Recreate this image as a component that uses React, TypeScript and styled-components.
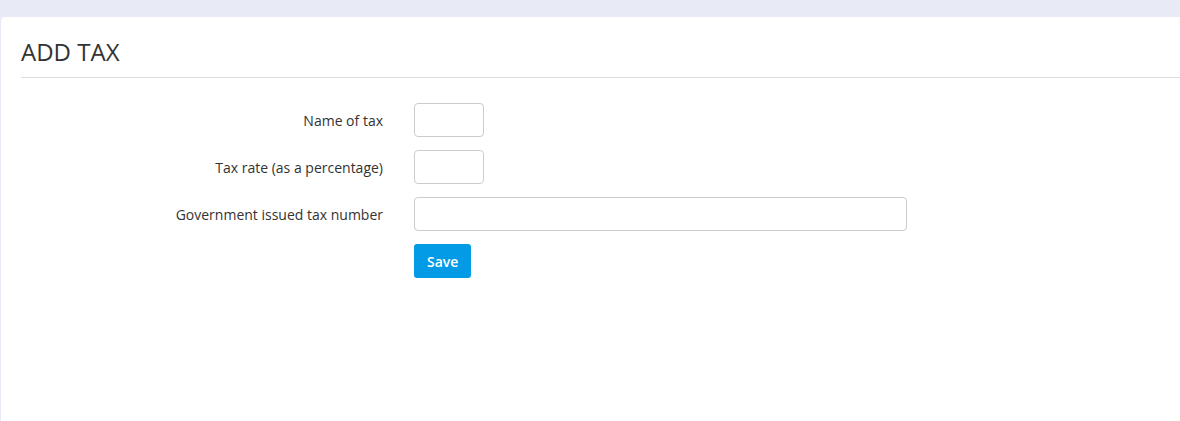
import React from "react";
import styled, { createGlobalStyle } from "styled-components";

interface Field {
    label: string;
    width: number;
}

const fields: Field[] = [
    { label: "Name of tax", width: 70 },
    { label: "Tax rate (as a percentage)", width: 70 },
    { label: "Government issued tax number", width: 493 },
];

const App: React.FC = () => {
    return (
        <>
            <GlobalStyle />
            <Page>
                <Card>
                    <Heading>ADD TAX</Heading>
                    <Form onSubmit={(e) => e.preventDefault()}>
                        {fields.map((field) => (
                            <React.Fragment key={field.label}>
                                <Label>{field.label}</Label>
                                <Input type="text" $width={field.width} />
                            </React.Fragment>
                        ))}
                        <span />
                        <div>
                            <SaveButton type="submit">Save</SaveButton>
                        </div>
                    </Form>
                </Card>
            </Page>
        </>
    );
};

export default App;

// Styled Components
const GlobalStyle = createGlobalStyle`
    html, body {
        margin: 0;
        padding: 0;
        background: #e8eaf5;
        font-family: "Open Sans", "Liberation Sans", sans-serif;
        color: #333;
        overflow: hidden;
    }
`;

const Page = styled.div`
    padding: 17px 0 0 1px;
    height: 100vh;
    box-sizing: border-box;
`;

const Card = styled.div`
    background: #fff;
    border-top-left-radius: 4px;
    height: 100%;
    padding-left: 20px;
`;

const Heading = styled.h2`
    margin: 0;
    padding-top: 18px;
    padding-bottom: 9px;
    font-size: 24px;
    font-weight: 400;
    line-height: 33px;
    color: #333;
    border-bottom: 1px solid #ddd;
`;

const Form = styled.form`
    display: grid;
    grid-template-columns: 362px auto;
    column-gap: 31px;
    row-gap: 13px;
    align-items: center;
    margin-top: 25px;
`;

const Label = styled.label`
    text-align: right;
    font-size: 14px;
    color: #333;
`;

const Input = styled.input<{ $width: number }>`
    width: ${(p) => p.$width}px;
    height: 34px;
    box-sizing: border-box;
    border: 1px solid #ccc;
    border-radius: 4px;
    padding: 6px 10px;
    font-family: inherit;
    font-size: 14px;
    outline: none;
`;

const SaveButton = styled.button`
    height: 34px;
    padding: 0 13px;
    border: none;
    border-radius: 3px;
    background: #039be5;
    color: #fff;
    font-family: "Open Sans", "Liberation Sans", sans-serif;
    font-size: 14px;
    font-weight: 600;
    cursor: pointer;
`;
